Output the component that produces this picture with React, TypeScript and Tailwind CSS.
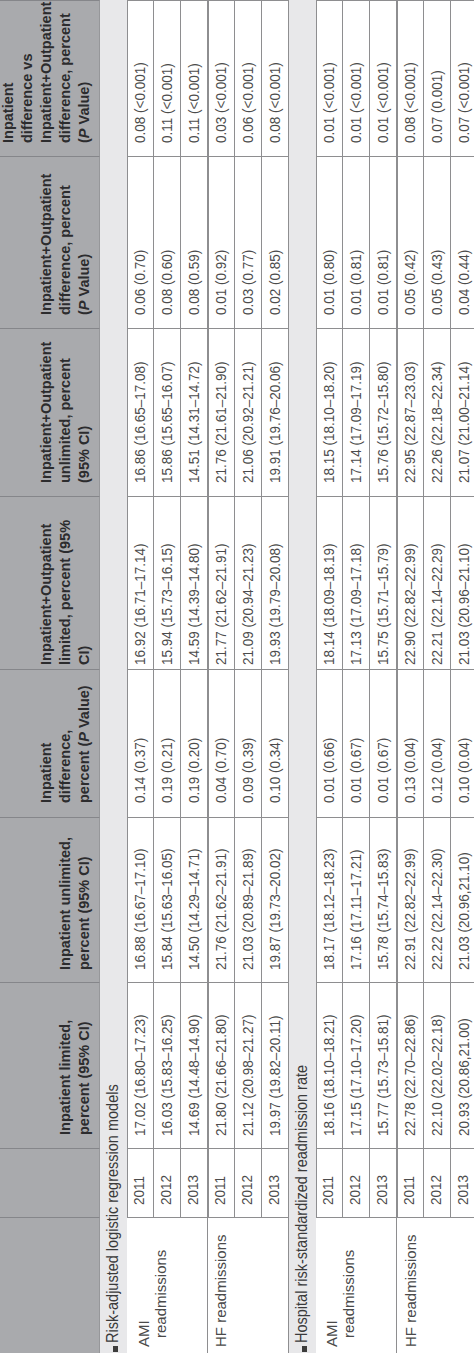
import React from 'react'

interface DataRow {
  year: string
  values: string[]
}

interface Group {
  label: string[]
  top: string
  rows: DataRow[]
}

interface Section {
  title: string
  groups: Group[]
}

const sections: Section[] = [
  {
    title: 'Risk-adjusted logistic regression models',
    groups: [
      {
        label: ['AMI', 'readmissions'],
        top: 'pt-[8px]',
        rows: [
          { year: '2011', values: ['17.02 (16.80–17.23)', '16.88 (16.67–17.10)', '0.14 (0.37)', '16.92 (16.71–17.14)', '16.86 (16.65–17.08)', '0.06 (0.70)', '0.08 (<0.001)'] },
          { year: '2012', values: ['16.03 (15.83–16.25)', '15.84 (15.63–16.05)', '0.19 (0.21)', '15.94 (15.73–16.15)', '15.86 (15.65–16.07)', '0.08 (0.60)', '0.11 (<0.001)'] },
          { year: '2013', values: ['14.69 (14.48–14.90)', '14.50 (14.29–14.71)', '0.19 (0.20)', '14.59 (14.39–14.80)', '14.51 (14.31–14.72)', '0.08 (0.59)', '0.11 (<0.001)'] },
        ],
      },
      {
        label: ['HF readmissions'],
        top: 'pt-[4px]',
        rows: [
          { year: '2011', values: ['21.80 (21.66–21.80)', '21.76 (21.62–21.91)', '0.04 (0.70)', '21.77 (21.62–21.91)', '21.76 (21.61–21.90)', '0.01 (0.92)', '0.03 (<0.001)'] },
          { year: '2012', values: ['21.12 (20.98–21.27)', '21.03 (20.89–21.89)', '0.09 (0.39)', '21.09 (20.94–21.23)', '21.06 (20.92–21.21)', '0.03 (0.77)', '0.06 (<0.001)'] },
          { year: '2013', values: ['19.97 (19.82–20.11)', '19.87 (19.73–20.02)', '0.10 (0.34)', '19.93 (19.79–20.08)', '19.91 (19.76–20.06)', '0.02 (0.85)', '0.08 (<0.001)'] },
        ],
      },
    ],
  },
  {
    title: 'Hospital risk-standardized readmission rate',
    groups: [
      {
        label: ['AMI', 'readmissions'],
        top: 'pt-[7px]',
        rows: [
          { year: '2011', values: ['18.16 (18.10–18.21)', '18.17 (18.12–18.23)', '0.01 (0.66)', '18.14 (18.09–18.19)', '18.15 (18.10–18.20)', '0.01 (0.80)', '0.01 (<0.001)'] },
          { year: '2012', values: ['17.15 (17.10–17.20)', '17.16 (17.11–17.21)', '0.01 (0.67)', '17.13 (17.09–17.18)', '17.14 (17.09–17.19)', '0.01 (0.81)', '0.01 (<0.001)'] },
          { year: '2013', values: ['15.77 (15.73–15.81)', '15.78 (15.74–15.83)', '0.01 (0.67)', '15.75 (15.71–15.79)', '15.76 (15.72–15.80)', '0.01 (0.81)', '0.01 (<0.001)'] },
        ],
      },
      {
        label: ['HF readmissions'],
        top: 'pt-[5px]',
        rows: [
          { year: '2011', values: ['22.78 (22.70–22.86)', '22.91 (22.82–22.99)', '0.13 (0.04)', '22.90 (22.82–22.99)', '22.95 (22.87–23.03)', '0.05 (0.42)', '0.08 (<0.001)'] },
          { year: '2012', values: ['22.10 (22.02–22.18)', '22.22 (22.14–22.30)', '0.12 (0.04)', '22.21 (22.14–22.29)', '22.26 (22.18–22.34)', '0.05 (0.43)', '0.07 (0.001)'] },
          { year: '2013', values: ['20.93 (20.86,21.00)', '21.03 (20.96,21.10)', '0.10 (0.04)', '21.03 (20.96–21.10)', '21.07 (21.00–21.14)', '0.04 (0.44)', '0.07 (<0.001)'] },
        ],
      },
    ],
  },
]

// left padding of each value column (header / body)
const headPad = ['pl-[13px]', 'pl-[12px]', 'pl-[14px]', 'pl-[4px]', 'pl-[13px]', 'pl-[13px]', 'pl-[13px]']
const bodyPad = ['pl-[12px]', 'pl-[12px]', 'pl-[14px]', 'pl-[4px]', 'pl-[13px]', 'pl-[13px]', 'pl-[13px]']

const headers: React.ReactNode[] = [
  <>Inpatient limited,<br />percent (95% CI)</>,
  <>Inpatient unlimited,<br />percent (95% CI)</>,
  <>Inpatient<br />difference,<br />percent (<i>P</i> Value)</>,
  <>Inpatient+Outpatient<br />limited, percent (95%<br />CI)</>,
  <>Inpatient+Outpatient<br />unlimited, percent<br />(95% CI)</>,
  <>Inpatient+Outpatient<br />difference, percent<br />(<i>P</i> Value)</>,
  <>Inpatient<br />difference vs<br />Inpatient+Outpatient<br />difference, percent<br />(<i>P</i> Value)</>,
]

function HeaderCell({ children, pad }: { children?: React.ReactNode; pad: string }) {
  return (
    <div className={`flex flex-col justify-end bg-[#a9aaad] border-r border-b border-r-[#85868a] border-b-[#96979a] pb-[5px] ${pad} text-[14.5px] leading-[19px] font-bold text-[#2c2c2e] whitespace-nowrap`}>
      <div>{children}</div>
    </div>
  )
}

function SectionRow({ title }: { title: string }) {
  return (
    <div className="col-span-9 flex items-center bg-[#e8e8ea] text-[14.5px] text-[#3a3a3a] whitespace-nowrap">
      <span className="ml-[1px] mr-[3px] mt-[4px] inline-block h-[5px] w-[6px] bg-[#3c3c3c]" />
      <span className="inline-block scale-y-[1.08]">{title}</span>
    </div>
  )
}

function GroupRows({ group }: { group: Group }) {
  return (
    <>
      <div className={`row-span-3 border-r border-b border-[#8e8e90] pl-[6px] ${group.top} text-[15px] leading-[17px] text-[#4a4a4a] whitespace-nowrap`}>
        <div>{group.label[0]}</div>
        {group.label[1] && <div className="pl-[9px]">{group.label[1]}</div>}
      </div>
      {group.rows.map((row, i) => (
        <React.Fragment key={row.year}>
          <div className={`flex items-center border-r border-b border-[#8e8e90] pl-[12px] text-[13.5px] text-[#4c4c4c] ${i === 0 ? 'border-t' : ''}`}>
            <span className="inline-block scale-y-[1.12]">{row.year}</span>
          </div>
          {row.values.map((v, j) => (
            <div
              key={j}
              className={`flex items-center border-r border-b border-[#8e8e90] ${bodyPad[j]} pt-[2px] text-[13.5px] text-[#4c4c4c] whitespace-nowrap ${i === 0 ? 'border-t' : ''}`}
            >
              <span className="inline-block scale-y-[1.12]">{v}</span>
            </div>
          ))}
        </React.Fragment>
      ))}
    </>
  )
}

export default function App() {
  return (
    <div className="w-[474px] h-[1353px] overflow-hidden bg-white">
      <div className="w-[1353px] h-[474px] origin-top-left [transform:translateY(1353px)_rotate(-90deg)] overflow-hidden bg-white font-['Liberation_Sans',Arial,sans-serif]">
        <div className="grid grid-cols-[136px_69px_166px_165px_148px_173px_168px_172px_156px] grid-rows-[100px_repeat(14,27px)]">
          <HeaderCell pad="" />
          <HeaderCell pad="" />
          {headers.map((h, i) => (
            <HeaderCell key={i} pad={headPad[i]}>
              {h}
            </HeaderCell>
          ))}

          {sections.map((s) => (
            <React.Fragment key={s.title}>
              <SectionRow title={s.title} />
              {s.groups.map((g, gi) => (
                <GroupRows key={gi} group={g} />
              ))}
            </React.Fragment>
          ))}
        </div>
      </div>
    </div>
  )
}
